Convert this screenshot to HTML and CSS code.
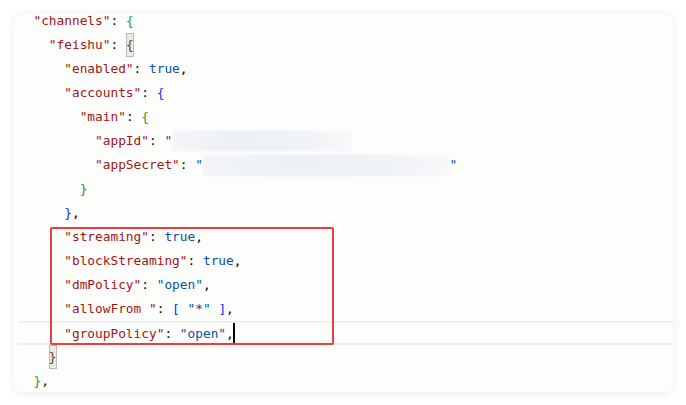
FILE: index.html
```html
<!DOCTYPE html>
<html>
<head>
<meta charset="utf-8">
<link rel="stylesheet" href="styles.css">
</head>
<body>
<div class="card">
  <div class="code">
<div class="line">  <span class="k">"channels"</span><span class="p">: </span><span class="b2">{</span></div>
<div class="line">    <span class="k">"feishu"</span><span class="p">: </span><span class="b3 match">{</span></div>
<div class="line">      <span class="k">"enabled"</span><span class="p">: </span><span class="v">true</span><span class="p">,</span></div>
<div class="line">      <span class="k">"accounts"</span><span class="p">: </span><span class="b4">{</span></div>
<div class="line">        <span class="k">"main"</span><span class="p">: </span><span class="b2">{</span></div>
<div class="line">          <span class="k">"appId"</span><span class="p">: </span><span class="v">"</span><span class="blur blur-id"></span></div>
<div class="line">          <span class="k">"appSecret"</span><span class="p">: </span><span class="v">"</span><span class="blur blur-secret"></span><span class="v">"</span></div>
<div class="line">        <span class="b2">}</span></div>
<div class="line">      <span class="b4">}</span><span class="p">,</span></div>
<div class="line">      <span class="k">"streaming"</span><span class="p">: </span><span class="v">true</span><span class="p">,</span></div>
<div class="line">      <span class="k">"blockStreaming"</span><span class="p">: </span><span class="v">true</span><span class="p">,</span></div>
<div class="line">      <span class="k">"dmPolicy"</span><span class="p">: </span><span class="v">"open"</span><span class="p">,</span></div>
<div class="line">      <span class="k">"allowFrom "</span><span class="p">: </span><span class="b4">[</span> <span class="v">"*"</span> <span class="b4">]</span><span class="p">,</span></div>
<div class="line current">      <span class="k">"groupPolicy"</span><span class="p">: </span><span class="v">"open"</span><span class="p">,</span><span class="cursor"></span></div>
<div class="line">    <span class="b3 match">}</span></div>
<div class="line">  <span class="b2">}</span><span class="p">,</span></div>
  </div>
  <div class="mark"></div>
</div>
</body>
</html>
```
FILE: styles.css
```css
html, body {
  margin: 0;
  padding: 0;
  background: #ffffff;
}
body {
  padding: 14px;
}
.card {
  position: relative;
  width: 659px;
  height: 378px;
  background: #fdfdfc;
  border-radius: 7px;
  box-shadow: 0 1px 9px rgba(0, 0, 0, 0.09);
  overflow: hidden;
}
.code {
  margin-top: -5px;
  padding-left: 4px;
  font-family: "DejaVu Sans Mono", "Liberation Mono", monospace;
  font-size: 12.8px;
  color: #000000;
}
.line {
  height: 24px;
  line-height: 24px;
  white-space: pre;
  box-sizing: border-box;
}
.line.current {
  border-top: 2px solid #eeeeee;
  border-bottom: 2px solid #eeeeee;
  line-height: 20px;
}
.k { color: #a31515; }
.v { color: #0451a5; }
.p { color: #000000; }
.b2 { color: #319331; }
.b3 { color: #7b3814; }
.b4 { color: #0431fa; }
.match {
  display: inline-block;
  height: 24px;
  line-height: 24px;
  vertical-align: top;
  background: rgba(0, 100, 0, 0.1);
  box-shadow: inset 0 0 0 1px #b9b9b9;
}
.blur {
  display: inline-block;
  vertical-align: middle;
  height: 20px;
  background: linear-gradient(90deg, #f3f5f8 0%, #edf0f5 35%, #eff2f6 70%, #f7f8fa 100%);
  filter: blur(1px);
}
.blur-id {
  width: 23.4ch;
  margin-top: -2px;
}
.blur-secret {
  width: 32ch;
  height: 21px;
}
.cursor {
  display: inline-block;
  width: 2px;
  height: 22px;
  margin-left: -1px;
  vertical-align: middle;
  background: #000000;
}
.mark {
  position: absolute;
  left: 36px;
  top: 213px;
  width: 284px;
  height: 118px;
  box-sizing: border-box;
  border: 2px solid #f03c3c;
  border-radius: 2px;
}
```
